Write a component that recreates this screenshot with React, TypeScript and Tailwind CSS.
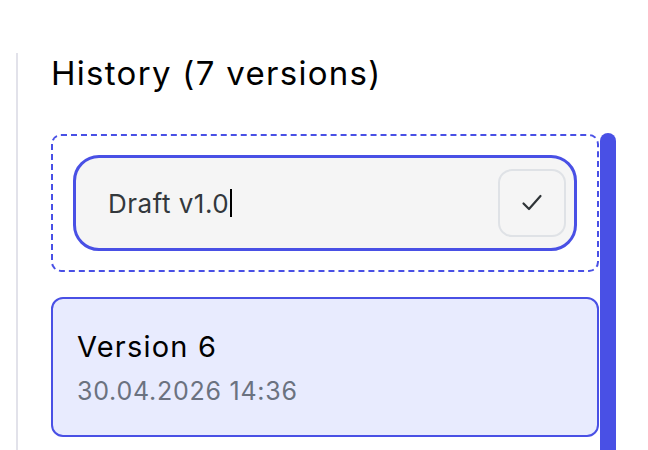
export default function App() {
  return (
    <div className="h-[450px] w-[648px] overflow-hidden bg-white pl-4 pt-[45px] font-['Inter',sans-serif]">
      <div className="h-full border-l-2 border-[#e2e2ea] pl-[33px]">
        {/* Header */}
        <h2 className="mt-2 text-[33px] leading-[40px] font-normal tracking-[1.3px] text-black">
          History (7 versions)
        </h2>

        {/* List + scrollbar */}
        <div className="mt-10 flex gap-px">
          <div className="mt-px flex w-[548px] shrink-0 flex-col gap-[25px]">
            {/* Rename row */}
            <div className="rounded-[10px] border-2 border-dashed border-[#4950e5] px-5 py-[19px]">
              <div className="flex items-center rounded-[26px] border-[3px] border-[#4950e5] bg-[#f5f5f5] py-[11px] pl-8 pr-2">
                <div className="flex flex-1 items-center text-[26px] tracking-[0.5px] text-[#33383c]">
                  <span>Draft v1.0</span>
                  <span className="ml-px h-7 w-[1.5px] bg-black" />
                </div>
                <button className="flex h-[68px] w-[68px] items-center justify-center rounded-[14px] border-2 border-[#dfe2e6] bg-[#f5f5f5]">
                  <svg width="24" height="24" viewBox="0 0 24 24" fill="none" stroke="#2f3437" strokeWidth="2.2" strokeLinecap="round" strokeLinejoin="round">
                    <path d="M3.5 12.5l5.5 5.5L20.5 5" />
                  </svg>
                </button>
              </div>
            </div>

            {/* Version card */}
            <div className="rounded-xl border-2 border-[#4950e5] bg-[#e8ebfe] pb-7 pl-6 pt-[30px]">
              <div className="text-[29px] leading-9 tracking-[1.2px] text-black">Version 6</div>
              <div className="mt-[10px] text-[25px] leading-8 tracking-[0.75px] text-[#6b7280]">30.04.2026 14:36</div>
            </div>
          </div>
          <div className="h-[400px] w-4 shrink-0 rounded-t-full bg-[#4950e5]" />
        </div>
      </div>
    </div>
  );
}
